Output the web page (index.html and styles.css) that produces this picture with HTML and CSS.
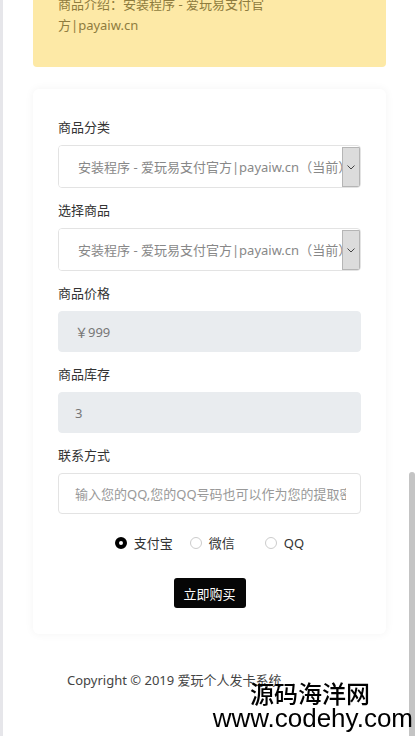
FILE: index.html
```html
<!DOCTYPE html>
<html lang="zh-CN">
<head>
    <meta charset="UTF-8">
    <meta name="viewport" content="width=device-width, initial-scale=1.0">
    <title>爱玩个人发卡系统</title>
    <link rel="stylesheet" href="styles.css">
</head>
<body>
    <div class="page">
        <div class="alert-info">
            <p>商品介绍：安装程序 - 爱玩易支付官方|payaiw.cn</p>
        </div>

        <form class="buy-card" onsubmit="return false">
            <div class="form-group">
                <label for="cate">商品分类</label>
                <div class="select-box">
                    <select id="cate">
                        <option>安装程序 - 爱玩易支付官方|payaiw.cn（当前）</option>
                    </select>
                    <span class="select-arrow">
                        <svg width="8" height="5" viewBox="0 0 8 5"><path d="M0.5 0.5 L4 4 L7.5 0.5" fill="none" stroke="#444" stroke-width="1"/></svg>
                    </span>
                </div>
            </div>

            <div class="form-group">
                <label for="goods">选择商品</label>
                <div class="select-box">
                    <select id="goods">
                        <option>安装程序 - 爱玩易支付官方|payaiw.cn（当前）</option>
                    </select>
                    <span class="select-arrow">
                        <svg width="8" height="5" viewBox="0 0 8 5"><path d="M0.5 0.5 L4 4 L7.5 0.5" fill="none" stroke="#444" stroke-width="1"/></svg>
                    </span>
                </div>
            </div>

            <div class="form-group">
                <label for="price">商品价格</label>
                <input type="text" id="price" value="￥999" disabled>
            </div>

            <div class="form-group">
                <label for="stock">商品库存</label>
                <input type="text" id="stock" value="3" disabled>
            </div>

            <div class="form-group">
                <label for="contact">联系方式</label>
                <input type="text" id="contact" placeholder="输入您的QQ,您的QQ号码也可以作为您的提取密码">
            </div>

            <div class="pay-types">
                <label class="pay-option"><span class="radio checked"></span>支付宝</label>
                <label class="pay-option"><span class="radio"></span>微信</label>
                <label class="pay-option"><span class="radio"></span>QQ</label>
            </div>

            <div class="buy-row">
                <button type="submit">立即购买</button>
            </div>
        </form>

        <footer class="copyright">Copyright © 2019 爱玩个人发卡系统</footer>
    </div>

    <div class="scroll-thumb"></div>
    <div class="watermark">
        <span class="wm-name">源码海洋网</span>
        <span class="wm-url">www.codehy.com</span>
    </div>
</body>
</html>
```

FILE: styles.css
```css
html {
    overflow: hidden;
}

body {
    margin: 0;
    min-height: 100vh;
    border-left: 3px solid #e6e6ea;
    background-color: #fff;
    font-family: "Noto Sans", "Noto Sans CJK SC", sans-serif;
    font-size: 13px;
    color: #333;
}

.page {
    margin-top: -18px;
    padding: 0 31px 0 30px;
}

.alert-info {
    background-color: #fde9a6;
    color: #8f7c3e;
    padding: 12px 25px 31px;
    border-radius: 0 0 4px 4px;
}
.alert-info p {
    margin: 0;
    max-width: 215px;
    line-height: 21px;
}

.buy-card {
    margin-top: 22px;
    padding: 28px 25px 26px;
    background-color: #fff;
    border-radius: 6px;
    box-shadow: 0 0 10px rgba(0, 0, 0, 0.05);
}

.form-group {
    margin-bottom: 12px;
}
.form-group label {
    display: block;
    line-height: 20px;
    margin-bottom: 8px;
    color: #333;
}

.select-box {
    display: flex;
    height: 43px;
    border: 1px solid #e3e3e3;
    border-radius: 4px;
    box-sizing: border-box;
    overflow: hidden;
}
.select-box select {
    flex: 1;
    min-width: 0;
    appearance: none;
    border: none;
    outline: none;
    background: #fff;
    padding: 0 0 0 19px;
    font-family: inherit;
    font-size: 13px;
    color: #888;
}
.select-arrow {
    width: 16px;
    margin: 1px 0 0;
    background-color: #dcdcdc;
    border: 1px solid #b5b5b5;
    display: flex;
    align-items: center;
    justify-content: center;
}

.form-group input {
    display: block;
    width: 100%;
    height: 41px;
    box-sizing: border-box;
    padding: 0 14px 0 16px;
    border: 1px solid #e3e3e3;
    border-radius: 4px;
    font-family: inherit;
    font-size: 13px;
    color: #777;
    background-color: #fff;
}
.form-group input:disabled {
    background-color: #e9ecef;
    border-color: #e9ecef;
}
.form-group input::placeholder {
    color: #999;
}

.pay-types {
    display: flex;
    justify-content: center;
    margin-top: 19px;
    line-height: 20px;
    color: #333;
}
.pay-option {
    display: flex;
    align-items: center;
    min-width: 75px;
}
.pay-option:last-child {
    min-width: 0;
}
.radio {
    width: 12px;
    height: 12px;
    box-sizing: border-box;
    border: 1px solid #ccc;
    border-radius: 50%;
    margin-right: 7px;
}
.radio.checked {
    border: 4px solid #000;
}

.buy-row {
    display: flex;
    justify-content: center;
    margin-top: 25px;
}
.buy-row button {
    width: 72px;
    height: 30px;
    background-color: #060606;
    color: #fff;
    border: none;
    border-radius: 3px;
    font-family: inherit;
    font-size: 13px;
    cursor: pointer;
}

.copyright {
    margin-top: 36px;
    padding-left: 34px;
    line-height: 20px;
    color: #444;
}

.scroll-thumb {
    position: fixed;
    top: 472px;
    right: 2px;
    bottom: 0;
    width: 6px;
    background-color: #c4c4c4;
    border-radius: 3px 3px 0 0;
}

.watermark {
    position: fixed;
    right: 4px;
    bottom: 5px;
    display: flex;
    flex-direction: column;
    align-items: flex-end;
    color: #000;
    font-family: "Liberation Sans", "Noto Sans CJK SC", sans-serif;
    line-height: 1;
}
.wm-name {
    font-family: "Noto Sans CJK SC", sans-serif;
    font-size: 24px;
    font-weight: 500;
    margin-right: 43px;
}
.wm-url {
    font-size: 26px;
}
```
